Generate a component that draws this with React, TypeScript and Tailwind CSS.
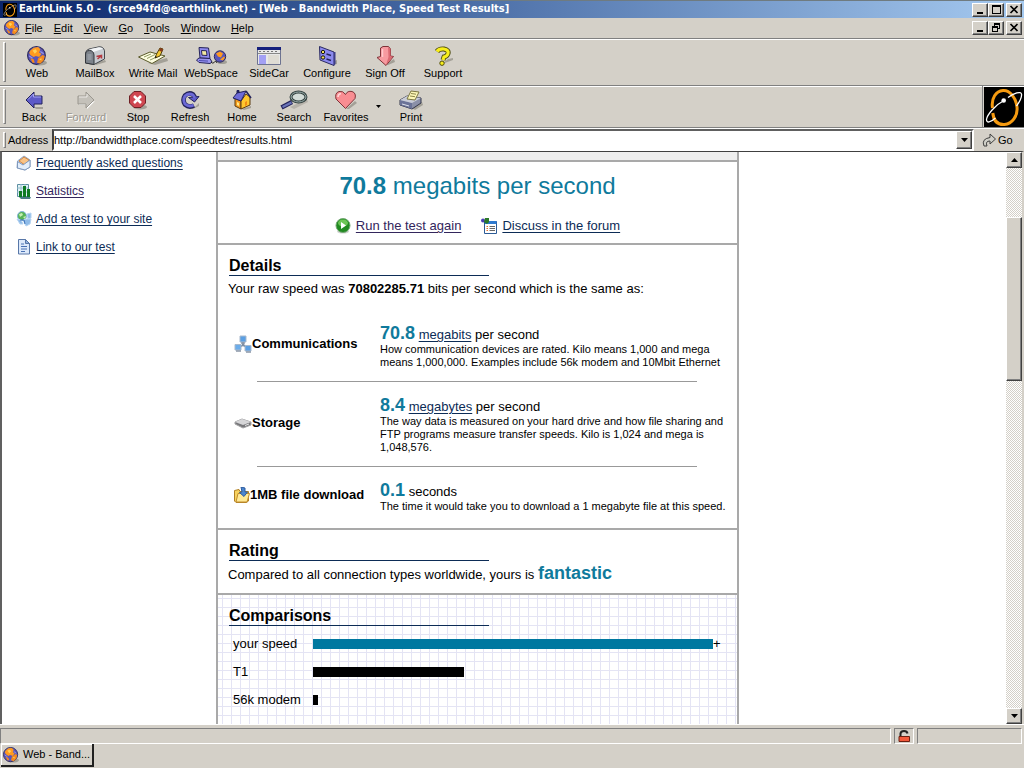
import { ReactNode } from "react";

type IconProps = { className?: string };

const bevel =
    "bg-[#d4d0c8] border border-t-white border-l-white border-r-[#404040] border-b-[#404040] shadow-[inset_-1px_-1px_0_#808080]";

const Globe = ({ className = "size-4" }: IconProps) => (
    <svg className={className} viewBox="0 0 18 18">
        <ellipse cx="11" cy="15" rx="7" ry="2.5" fill="#a3a097" />
        <circle cx="8.5" cy="8.5" r="8" fill="#5a55b8" stroke="#2c2a5c" />
        <path d="M3 4 6 1.500 10 1l2 2-1 3 2 1-2 3-3-1-2 1-3-2-1-2z" fill="#ff9a1f" />
        <path d="M10 11l4-3 2 1-1 4-3 3-3-1zM3 11l3 1 1 3-2 0z" fill="#f58a1c" />
        <path d="M5 4l3-1 1 2-2 2zM11 12l2-1 0 2z" fill="#ffd25a" />
        <path d="M2 9l3 2M12 5l3 2" stroke="#9a98e8" />
    </svg>
);

const MailBoxIcon = () => (
    <svg className="h-5 w-6" viewBox="0 0 24 20">
        <path d="M11 17 22 14l1 2-10 3z" fill="#a3a097" />
        <path d="M2.500 17V7q.5-3 3.500-4L16 .8q4.500-.3 5.500 4V13L11 18.500z" fill="#c7cbd0" stroke="#45484d" />
        <path d="M2.500 17V9q0-4.500 4-4.500T11 9v9.500z" fill="#7d838b" stroke="#33363b" />
        <path d="M6 3.200 16 1.200q2.500 0 4 1.500L10.500 6Q9 3.500 6 3.200z" fill="#f4f6f8" />
        <path d="M4.500 9h4M4.500 11h4M4.500 13h4" stroke="#a9aeb6" />
        <path d="M13.500 10.500l5-1v3M14.500 13l3.500-3" stroke="#b33a40" fill="none" strokeWidth="1.500" />
    </svg>
);

const WriteIcon = () => (
    <svg className="h-5 w-8" viewBox="0 0 32 20">
        <path d="M11 17 30 12l1 3-13 4z" fill="#a3a097" />
        <path d="M1.500 11 13 6l15 4-13 7.500z" fill="#fdfde0" stroke="#5a5a2a" />
        <path d="M7 11l7-3M10 12.500l8-4M13 14l9-4" stroke="#8f9a62" />
        <path d="M18 12l1.500-4L23 2l3 1-3 7z" fill="#f0c631" stroke="#4f4210" />
        <path d="M23 2l3 1-1 3-3-1.500z" fill="#8a3c1c" />
        <path d="M18 12l2-1-1.500-1z" fill="#111" />
    </svg>
);

const WebSpaceIcon = () => (
    <svg className="h-5 w-8" viewBox="0 0 32 20">
        <path d="M4 1.500 13.500 2 15 12.500 5 12z" fill="#8e8aee" stroke="#25235a" />
        <path d="M6.500 4.500l5 .3.500 4.700-5-.3z" fill="#f3e9a0" stroke="#25235a" />
        <path d="M1.500 14 4 12l11 .5L17 16l-2 1.500-11-1z" fill="#9995ee" stroke="#25235a" />
        <path d="M4 14.500l9 .6" stroke="#4d4ab0" />
        <path d="M16 16q2 2.500 3.500 0t2.500 1" fill="none" stroke="#222" />
        <ellipse cx="27" cy="16" rx="5" ry="2" fill="#a3a097" />
        <circle cx="25" cy="10.500" r="5.700" fill="#5a55b8" stroke="#2c2a5c" />
        <path d="M21 7.500l4-2 3 2-2 4-3-1zM25 13.500l4-3 1 1-2 3z" fill="#ff9a1f" />
    </svg>
);

const SideCarIcon = () => (
    <svg className="h-5 w-6" viewBox="0 0 24 20">
        <path d="M.5 1.500h23v17H.5z" fill="#e8e8e8" stroke="#6d7390" />
        <path d="M0 1h24v3H0z" fill="#16207c" />
        <path d="M2 5.500h20" stroke="#777" strokeDasharray="2 2" />
        <path d="M1 7.500h22" stroke="#888" />
        <path d="M2 9h7v9H2z" fill="#a3a0f4" />
        <path d="M11 9h11v9H11z" fill="#dfdcd4" />
    </svg>
);

const ConfigureIcon = () => (
    <svg className="h-5 w-6" viewBox="0 0 24 20">
        <path d="M14 17l8-3v4l-5 1z" fill="#a3a097" />
        <path d="M4.500.5 19 6v13.500L5 14z" fill="#8b89ee" stroke="#2b2a60" />
        <path d="M19 6h1.500v12L19 19.500z" fill="#3f3d88" />
        <circle cx="8" cy="6" r="1.700" fill="#f2e05a" stroke="#111" />
        <circle cx="8" cy="11.500" r="1.700" fill="#f2e05a" stroke="#111" />
        <path d="M11.500 8l4.500 1.500M11.500 13l4.500 1.500" stroke="#24235a" strokeWidth="1.500" />
    </svg>
);

const SignOffIcon = () => (
    <svg className="h-5 w-5" viewBox="0 0 20 20">
        <path d="M11 18l8-5 1 3-7 3z" fill="#a3a097" />
        <path d="M5.500 2 8 .5h5.500L15.500 3v7l3 .5L11 19.500 2 11.500l3.500-1z" fill="#f79aa0" stroke="#7e3338" />
        <path d="M13 1l2.500 2v7.500l2.500 0-7 8.500 2.500-8z" fill="#dc6a73" />
        <path d="M7.500 3v8" stroke="#ffc9cc" strokeWidth="1.500" />
    </svg>
);

const SupportIcon = () => (
    <svg className="h-5 w-5" viewBox="0 0 20 20">
        <path d="M9 18l6-5 5-1v2z" fill="#a3a097" />
        <path d="M4 5.500Q6 2.500 11 3q5 1 4 4.500-1 3-4 3.500l-1 3" fill="none" stroke="#4d4b10" strokeWidth="5" />
        <path d="M4 5.500Q6 2.500 11 3q5 1 4 4.500-1 3-4 3.500l-1 3" fill="none" stroke="#f8ee1c" strokeWidth="3.200" />
        <circle cx="9" cy="17.200" r="2.200" fill="#f8ee1c" stroke="#4d4b10" />
    </svg>
);

const BackIcon = () => (
    <svg className="h-5 w-5" viewBox="0 0 20 20">
        <path d="M10 17h9v2h-7z" fill="#a3a097" />
        <path d="M2 10 10 2v4h8v8h-8v4z" fill="#5d5ac8" stroke="#23225c" />
        <path d="M4 9.500 9.500 4v3H17" fill="none" stroke="#a6a4f4" />
    </svg>
);

const ForwardIcon = () => (
    <svg className="h-5 w-5" viewBox="0 0 20 20">
        <path d="M19 11l-8 8v-4H3v-2l8 1z" fill="#fff" />
        <path d="M18 10 10 2v4H2v8h8v4z" fill="#c4c1ba" stroke="#9a978f" />
        <path d="M3 7h8V4" fill="none" stroke="#eceae6" />
    </svg>
);

const StopIcon = () => (
    <svg className="h-5 w-5" viewBox="0 0 20 20">
        <ellipse cx="12" cy="17" rx="7" ry="2.500" fill="#a3a097" />
        <path d="M6 1.500h7L17.500 6v7L13 17.500H6L1.500 13V6z" fill="#cf4750" stroke="#6e1f24" />
        <path d="M6 6l7 7M13 6l-7 7" stroke="#fff" strokeWidth="2.500" />
    </svg>
);

const RefreshIcon = () => (
    <svg className="h-5 w-5" viewBox="0 0 20 20">
        <path d="M7 18l8-1 4-4v3l-6 3z" fill="#a3a097" />
        <path d="M14 15.500Q9 18 5 14.500 2 10 5 5.500 9 2 13 4.500l2 3" fill="none" stroke="#23225c" strokeWidth="4.600" />
        <path d="M19 6.500 14.500 12 8.500 7.500z" fill="#5d5ac8" stroke="#23225c" />
        <path d="M13.500 15Q9 17.500 5 14 2.500 10 5 6q4-3.500 8-1l2 3" fill="none" stroke="#6c69d6" strokeWidth="2.800" />
    </svg>
);

const HomeIcon = () => (
    <svg className="h-5 w-5" viewBox="0 0 20 20">
        <path d="M10 19l9-3v2l-7 2z" fill="#a3a097" />
        <path d="M3 8v8l6 3V11z" fill="#f29a1e" stroke="#5a3a10" />
        <path d="M9 11v8l9-4V7l-4-3z" fill="#ffc72e" stroke="#5a3a10" />
        <path d="M1 8 5 3l9-2-5 10z" fill="#6f6cd8" stroke="#23225c" />
        <path d="M5 3V.500h2V3" fill="#23225c" stroke="#23225c" />
        <path d="M14 1l5 7" stroke="#23225c" strokeWidth="1.500" />
        <path d="M13 12l2-1v4l-2 1z" fill="#f08c14" />
        <path d="M5 12l2 1v3l-2-1z" fill="#ffe98a" />
    </svg>
);

const SearchIcon = () => (
    <svg className="h-5 w-7" viewBox="0 0 28 20">
        <path d="M10 17 27 9l1 3-14 7z" fill="#a3a097" opacity=".6" />
        <path d="M12 12 1.500 17.500" stroke="#23225c" strokeWidth="4.500" />
        <path d="M11.500 12.500 2.500 17" stroke="#6a74b8" strokeWidth="2.200" />
        <ellipse cx="18.500" cy="7" rx="7.500" ry="5" fill="#d3dcd8" stroke="#33403f" strokeWidth="3" />
        <ellipse cx="18.500" cy="7" rx="7.500" ry="5" fill="none" stroke="#9fb3b1" />
    </svg>
);

const FavoritesIcon = () => (
    <svg className="h-5 w-6" viewBox="0 0 24 20">
        <path d="M12 19l9-8 2 2-8 6z" fill="#a3a097" />
        <path d="M11.500 18.500 2 9Q.5 3 5 1.500q4-1 6.500 3 2-4 6.500-3 4.500 1.500 3 7z" fill="#f98d92" stroke="#7e3338" />
        <path d="M4 7q0-3 3-3.500" fill="none" stroke="#ffd3d5" strokeWidth="1.500" />
    </svg>
);

const PrintIcon = () => (
    <svg className="h-5 w-6" viewBox="0 0 24 20">
        <path d="M13 18l10-6 1 3-8 5z" fill="#a3a097" />
        <path d="M1 10 8 6l14 2v5l-9 6L1 15z" fill="#8b90a8" stroke="#33364a" />
        <path d="M1 10l12 3v6L1 15z" fill="#6b7398" />
        <path d="M1 10 8 6l14 2-9 5z" fill="#c9ccd8" />
        <path d="M8 9l4-8 8 1-4 8z" fill="#fdf7b8" stroke="#7a7540" />
        <path d="M12 3.500l5 .7M11 6l5 .7" stroke="#8d874a" />
        <path d="M3 14l7 2" stroke="#dfe2ec" />
    </svg>
);

const EarthLinkLogo = ({ className = "size-10" }: IconProps) => (
    <svg className={className} viewBox="0 0 40 40">
        <path d="M0 0h40v40H0z" fill="#000" />
        <path
            d="M8.500 21C7 11 12 4 19 3.500S32 11 33 20s-5 17-12.500 17.500S9.500 33 8.800 26"
            fill="none"
            stroke="#f59a10"
            strokeWidth="3"
        />
        <path
            d="M24 10.500C30 6 37 4 37.500 7s-2 8-5 12M20 13.500C11 18 3 28 2.500 32.500c0 4 4 3 9-1.500"
            fill="none"
            stroke="#fff"
            strokeWidth="1.300"
        />
        <circle cx="19.700" cy="13.500" r="2.300" fill="#fff" />
    </svg>
);

const EnvelopeIcon = () => (
    <svg className="size-4" viewBox="0 0 16 16">
        <path d="M1.500 6 8 1l6 4v7l-5 3-8-2z" fill="#c8dcf2" stroke="#8fa6c4" />
        <path d="M3 6l5-4 5 3-4 5z" fill="#f9c386" stroke="#d4843c" />
        <path d="M1.500 6.500 7 10l7-5v7l-5 3-7.500-2z" fill="#e3eefb" stroke="#8099bd" />
    </svg>
);

const StatsIcon = () => (
    <svg className="size-4" viewBox="0 0 16 16">
        <path d="M1.500 1.500h11v12h-11z" fill="#e2f2f6" stroke="#5d8fa2" />
        <path d="M1 5h11M1 9h11M5 1v12M9 1v12" stroke="#94bccb" />
        <path d="M3 8h3v6H3zM7 3h3v11H7zM11 6h3v9h-3z" fill="#0d7a22" />
        <path d="M3 14h12l-1 2H5z" fill="#4a7d84" />
    </svg>
);

const SiteIcon = () => (
    <svg className="size-4" viewBox="0 0 16 16">
        <circle cx="6" cy="5" r="4.500" fill="#57b457" stroke="#87b6dc" />
        <path d="M3 3l3-1 1 2-3 2zM7 6l3-1-1 3z" fill="#c5efb0" />
        <path d="M1 8l4 1 2 4H4zM11 3l4-1v5l-3 1zM7 9l4-1h4l-1 5-4 2z" fill="#8fbbe8" stroke="#b5d4f2" />
        <path d="M4 9h4l1 4" stroke="#3d72b8" fill="none" />
    </svg>
);

const DocIcon = () => (
    <svg className="size-4" viewBox="0 0 16 16">
        <path d="M2.500.5h7l4 4v10.500h-11z" fill="#dce9fb" stroke="#5877a8" />
        <path d="M9.500.5v4h4z" fill="#8fb0df" stroke="#5877a8" />
        <path d="M5 5h3M5 7.500h6M5 10h6M5 12.500h4" stroke="#4a72b5" />
    </svg>
);

const RunIcon = () => (
    <svg className="size-4" viewBox="0 0 16 16">
        <ellipse cx="8" cy="13.500" rx="6" ry="2" fill="#cfd4cf" />
        <circle cx="8" cy="7.500" r="7" fill="#218a21" stroke="#75a875" />
        <ellipse cx="8" cy="5" rx="5" ry="3.500" fill="#6cc556" />
        <path d="M6 4l5 3.500L6 11z" fill="#fff" />
    </svg>
);

const ForumIcon = () => (
    <svg className="size-4" viewBox="0 0 16 16">
        <path d="M3.500 3.500h12v12h-12z" fill="#fff" stroke="#2c5b96" />
        <path d="M4 3h11.500v3H4z" fill="#2f7bd0" />
        <path d="M8.500 8.500H14M8.500 10.500H14M8.500 12.500H14" stroke="#666" />
        <path d="M5.500 8.500H7M5.500 10.500H7M5.500 12.500H7" stroke="#e0702c" />
        <circle cx="2" cy="2.500" r="2" fill="#4a3fb5" />
        <path d="M4 0h4v4l-2 2-3-2z" fill="#2d7a2a" />
    </svg>
);

const NetworkIcon = () => (
    <svg className="size-[18px]" viewBox="0 0 18 18">
        <path d="M9 6v5M9 10l-5 3M9 10l6 3" stroke="#7d8fa5" strokeWidth="2" />
        <path d="M6 1h6v6H6z" fill="#5b9fe3" stroke="#a9b9cc" />
        <path d="M1 9.500h6v5.500H1z" fill="#6badeb" stroke="#a9b9cc" />
        <path d="M11 10.500h6v5.500h-6z" fill="#5b9fe3" stroke="#a9b9cc" />
        <path d="M2 16h5M12 17h5M7 8h4" stroke="#8a97a8" strokeWidth="1.500" />
    </svg>
);

const DriveIcon = () => (
    <svg className="size-[18px]" viewBox="0 0 18 18">
        <path d="M1 8l7-3 9 3v3l-8 3-8-4z" fill="#77777a" stroke="#a4a4a6" />
        <path d="M1 8l7-3 9 3-8 3z" fill="#d6d6d8" />
        <path d="M11 11.500l4-1.500" stroke="#e8e8e8" />
    </svg>
);

const FolderIcon = () => (
    <svg className="size-4" viewBox="0 0 16 16">
        <path d="M.5 3.500 5 2.500l1 2h8.500V14l-2 1.500H2L.5 14z" fill="#f7d25e" stroke="#b07f24" />
        <path d="M4 6.500h11.500L13 15H2z" fill="#ffe995" stroke="#c08c2c" />
        <path d="M7 0l4 1v4h2.500L10 9.500 5.500 5.500 8 5z" fill="#4b86cf" stroke="#2f5c9e" />
    </svg>
);

const LockIcon = () => (
    <svg className="h-3 w-3" viewBox="0 0 12 12">
        <path d="M2.500 6V3.500Q3 1 6 1t3.500 2.500" fill="none" stroke="#222" strokeWidth="2" />
        <path d="M1 6.500h10.500v5H1z" fill="#f2583a" stroke="#6b2012" />
        <path d="M2 9h9" stroke="#f2583a" />
    </svg>
);

const Triangle = ({ up = false }: { up?: boolean }) => (
    <svg className="h-1 w-[7px]" viewBox="0 0 7 4">
        <path d={up ? "M0 4h7L3.500 0z" : "M0 0h7L3.500 4z"} fill="#000" />
    </svg>
);

const glyphs = {
    Minimize: <path d="M2 7h6v2H2z" />,
    Maximize: <path d="M1 0h9v9H1zM2 2v6h7V2z" fillRule="evenodd" />,
    Restore: <path d="M3 0h6v6H7v3H1V3h2zM4 2v1h3v2h1V2zM2 5v3h4V5z" fillRule="evenodd" />,
    Close: <path d="M1.500 1l7 7M8.500 1l-7 7" stroke="#000" strokeWidth="1.700" />,
};

const WindowButton = ({ name }: { name: keyof typeof glyphs }) => (
    <button
        aria-label={name}
        className={`${bevel} flex h-[14px] w-4 items-center justify-center`}
    >
        <svg className="size-[10px]" viewBox="0 0 10 10">
            {glyphs[name]}
        </svg>
    </button>
);

const WindowButtons = ({ restore = false }: { restore?: boolean }) => (
    <div className="ml-auto flex">
        <WindowButton name="Minimize" />
        <WindowButton name={restore ? "Restore" : "Maximize"} />
        <div className="w-[2px]" />
        <WindowButton name="Close" />
    </div>
);

const menus = ["File", "Edit", "View", "Go", "Tools", "Window", "Help"];

const mainTools = [
    { label: "Web", icon: <Globe className="h-5 w-5" /> },
    { label: "MailBox", icon: <MailBoxIcon /> },
    { label: "Write Mail", icon: <WriteIcon /> },
    { label: "WebSpace", icon: <WebSpaceIcon /> },
    { label: "SideCar", icon: <SideCarIcon /> },
    { label: "Configure", icon: <ConfigureIcon /> },
    { label: "Sign Off", icon: <SignOffIcon /> },
    { label: "Support", icon: <SupportIcon /> },
];

const webTools = [
    { label: "Back", icon: <BackIcon /> },
    { label: "Forward", icon: <ForwardIcon />, disabled: true },
    { label: "Stop", icon: <StopIcon /> },
    { label: "Refresh", icon: <RefreshIcon /> },
    { label: "Home", icon: <HomeIcon /> },
    { label: "Search", icon: <SearchIcon /> },
    { label: "Favorites", icon: <FavoritesIcon />, menu: true },
    { label: "Print", icon: <PrintIcon /> },
];

const sideLinks = [
    { label: "Frequently asked questions", icon: <EnvelopeIcon /> },
    { label: "Statistics", icon: <StatsIcon />, visited: true },
    { label: "Add a test to your site", icon: <SiteIcon /> },
    { label: "Link to our test", icon: <DocIcon /> },
];

const bars = [
    { label: "your speed", width: 400, color: "bg-[#0078a0]", over: true },
    { label: "T1", width: 151, color: "bg-black" },
    { label: "56k modem", width: 5, color: "bg-black" },
];

const Grip = () => (
    <div className="mr-[2px] ml-[3px] my-[3px] w-[3px] border border-t-white border-l-white border-r-[#808080] border-b-[#808080]" />
);

const Link = ({ children, visited = false }: { children: ReactNode; visited?: boolean }) => (
    <a href="#" className={`underline underline-offset-2 ${visited ? "text-[#33265c]" : "text-[#0c2c56]"}`}>
        {children}
    </a>
);

const Heading = ({ children }: { children: ReactNode }) => (
    <h2 className="ml-[11px] w-[260px] border-b border-[#0c2c56] text-base leading-[18px] font-bold">{children}</h2>
);

type DetailProps = {
    icon: ReactNode;
    label: string;
    value: string;
    unit: ReactNode;
    children: ReactNode;
};

const Detail = ({ icon, label, value, unit, children }: DetailProps) => (
    <div className="flex">
        <dt className="flex w-[146px] shrink-0 items-center pb-1 leading-4 font-bold whitespace-nowrap">
            {icon}
            {label}
        </dt>
        <dd className="w-[354px]">
            <p className="pt-1 leading-4">
                <b className="text-lg leading-3 text-[#0f7a9c]">{value}</b> {unit}
            </p>
            <p className="text-[11px] leading-[13px]">{children}</p>
        </dd>
    </div>
);

const App = () => {
    return (
        <div className="flex h-screen flex-col overflow-hidden bg-[#d4d0c8] font-['Liberation_Sans',Arial,sans-serif] text-[11px] text-black">
            <header className="shrink-0">
                <div className="flex h-[18px] items-center border-t border-[#6f7b80] bg-linear-to-r from-[#0a246a] to-[#a6caf0] pr-[2px] pl-[3px]">
                    <EarthLinkLogo className="size-[14px]" />
                    <h1 className="ml-[2px] font-['DejaVu_Sans_Condensed',sans-serif] font-bold whitespace-pre text-white">
                        {"EarthLink 5.0 -  (srce94fd@earthlink.net) - [Web - Bandwidth Place, Speed Test Results]"}
                    </h1>
                    <WindowButtons />
                </div>

                <nav className="flex h-5 items-center pr-[2px] pl-1">
                    <Globe />
                    <div className="ml-[5px] flex gap-[11px]">
                        {menus.map((menu) => (
                            <button key={menu}>
                                <u>{menu[0]}</u>
                                {menu.slice(1)}
                            </button>
                        ))}
                    </div>
                    <WindowButtons restore />
                </nav>

                <div className="flex h-[47px] border-t border-[#808080] shadow-[inset_0_1px_0_#fff]">
                    <Grip />
                    {mainTools.map((tool) => (
                        <button
                            key={tool.label}
                            className="flex w-[58px] flex-col items-center justify-center pt-[2px] whitespace-nowrap"
                        >
                            {tool.icon}
                            <span className="leading-[14px]">{tool.label}</span>
                        </button>
                    ))}
                </div>

                <div className="flex h-[42px] border-t border-[#808080] shadow-[inset_0_1px_0_#fff]">
                    <Grip />
                    {webTools.map((tool) => (
                        <div key={tool.label} className="flex">
                            <button
                                disabled={tool.disabled}
                                className="flex w-[52px] flex-col items-center justify-center whitespace-nowrap disabled:text-[#9a978f] disabled:[text-shadow:1px_1px_0_#fff]"
                            >
                                {tool.icon}
                                <span className="leading-[14px]">{tool.label}</span>
                            </button>
                            {tool.menu && (
                                <button aria-label="Favorites menu" className="flex w-[13px] items-center justify-center">
                                    <svg className="h-[3px] w-[5px]" viewBox="0 0 5 3">
                                        <path d="M0 0h5L2.500 3z" />
                                    </svg>
                                </button>
                            )}
                        </div>
                    ))}
                    <div className="ml-auto border-l border-[#808080] pt-px pl-px">
                        <EarthLinkLogo />
                    </div>
                </div>

                <form className="flex h-6 border-t border-[#808080] pt-px shadow-[inset_0_1px_0_#fff]">
                    <Grip />
                    <label htmlFor="address" className="w-11 leading-[22px]">
                        Address
                    </label>
                    <div className="flex flex-1 border-2 border-r-white border-b-white border-t-[#606060] border-l-[#404040] bg-white">
                        <input
                            id="address"
                            className="min-w-0 flex-1 outline-none"
                            defaultValue="http://bandwidthplace.com/speedtest/results.html"
                        />
                        <button type="button" aria-label="Show addresses" className={`${bevel} flex w-4 items-center justify-center`}>
                            <Triangle />
                        </button>
                    </div>
                    <button type="button" className="flex w-[50px] items-center gap-[2px] pl-2">
                        <svg className="size-[14px]" viewBox="0 0 14 14">
                            <path d="M2 13Q-1 6 8 4.500V1l5.500 5L8 11V8Q3 8 5 13z" fill="#cfcfc8" stroke="#3f3f3f" />
                        </svg>
                        Go
                    </button>
                </form>
            </header>

            <div className="flex min-h-0 flex-1 border-t border-r-2 border-l-2 border-t-[#404040] border-r-[#d4d0c8] border-l-[#606060] bg-white">
                <aside className="w-[214px] shrink-0 pt-px pl-[14px]">
                    <ul className="flex flex-col gap-2 text-xs leading-5">
                        {sideLinks.map((link) => (
                            <li key={link.label} className="flex items-center gap-1">
                                {link.icon}
                                <Link visited={link.visited}>{link.label}</Link>
                            </li>
                        ))}
                    </ul>
                </aside>

                <main className="w-[523px] shrink-0 overflow-hidden border-x-2 border-[#a9a9a9] text-[13px]">
                    <div className="h-2 bg-[#eee]" />

                    <section className="border-t-2 border-[#a9a9a9] pt-[10px] pb-[7px] text-center">
                        <p className="text-2xl leading-7 text-[#0f7a9c]">
                            <b>70.8</b> megabits per second
                        </p>
                        <p className="mt-4 flex justify-center gap-5 leading-5">
                            <span className="flex items-center gap-[5px]">
                                <RunIcon />
                                <Link visited>Run the test again</Link>
                            </span>
                            <span className="flex items-center gap-[5px]">
                                <ForumIcon />
                                <Link>Discuss in the forum</Link>
                            </span>
                        </p>
                    </section>

                    <section className="border-t-2 border-[#a9a9a9] pt-3 pb-[15px]">
                        <Heading>Details</Heading>
                        <p className="mt-[5px] ml-[10px] leading-4">
                            Your raw speed was <b>70802285.71</b> bits per second which is the same as:
                        </p>
                        <dl className="mt-[26px] pl-4">
                            <Detail
                                icon={<NetworkIcon />}
                                label="Communications"
                                value="70.8"
                                unit={<><Link>megabits</Link> per second</>}
                            >
                                How communication devices are rated. Kilo means 1,000 and mega means 1,000,000. Examples
                                include 56k modem and 10Mbit Ethernet
                            </Detail>
                            <hr className="mt-3 mb-[13px] ml-[23px] w-[440px] border-[#999]" />
                            <Detail
                                icon={<DriveIcon />}
                                label="Storage"
                                value="8.4"
                                unit={<><Link>megabytes</Link> per second</>}
                            >
                                The way data is measured on your hard drive and how file sharing and FTP programs measure
                                transfer speeds. Kilo is 1,024 and mega is 1,048,576.
                            </Detail>
                            <hr className="mt-3 mb-[13px] ml-[23px] w-[440px] border-[#999]" />
                            <Detail icon={<FolderIcon />} label="1MB file download" value="0.1" unit="seconds">
                                The time it would take you to download a 1 megabyte file at this speed.
                            </Detail>
                        </dl>
                    </section>

                    <section className="border-t-2 border-[#a9a9a9] pt-3 pb-2">
                        <Heading>Rating</Heading>
                        <p className="mt-1 ml-[10px] leading-5">
                            Compared to all connection types worldwide, yours is{" "}
                            <b className="text-lg leading-4 text-[#0f7a9c]">fantastic</b>
                        </p>
                    </section>

                    <section className="h-40 border-t-2 border-[#a9a9a9] bg-[linear-gradient(to_right,#e4e4f4_1px,transparent_1px),linear-gradient(to_bottom,#e4e4f4_1px,transparent_1px)] bg-[length:9px_9px] bg-[position:4px_3px] pt-3">
                        <Heading>Comparisons</Heading>
                        <ul className="mt-1 ml-[15px]">
                            {bars.map((bar) => (
                                <li key={bar.label} className="flex h-7 items-center">
                                    <span className="w-20">{bar.label}</span>
                                    <span className={`h-[10px] ${bar.color}`} style={{ width: bar.width }} />
                                    {bar.over && "+"}
                                </li>
                            ))}
                        </ul>
                    </section>
                </main>

                <div className="ml-auto flex w-4 flex-col bg-[repeating-conic-gradient(#fff_0_25%,#d4d0c8_0_50%)] bg-[length:2px_2px]">
                    <button aria-label="Scroll up" className={`${bevel} flex h-4 items-center justify-center`}>
                        <Triangle up />
                    </button>
                    <div className="flex-[49]" />
                    <div className={`${bevel} flex-[163]`} />
                    <div className="flex-[328]" />
                    <button aria-label="Scroll down" className={`${bevel} flex h-4 items-center justify-center`}>
                        <Triangle />
                    </button>
                </div>
            </div>

            <footer className="shrink-0">
                <div className="flex h-5 gap-[3px] border-t border-white pt-[3px] pr-[2px]">
                    <div className="flex-1 border border-t-[#808080] border-l-[#808080] border-r-white border-b-white" />
                    <div className="flex w-5 items-center justify-center border border-t-[#808080] border-l-[#808080] border-r-white border-b-white">
                        <LockIcon />
                    </div>
                    <div className="w-[105px] border border-t-[#808080] border-l-[#808080] border-r-white border-b-white" />
                </div>
                <div className="h-6 px-px">
                    <button className="flex h-[23px] w-[93px] items-center gap-1 border-r-2 border-b-2 border-[#202020] pl-[2px] shadow-[inset_1px_1px_0_#fff]">
                        <Globe />
                        Web - Band...
                    </button>
                </div>
            </footer>
        </div>
    );
};

export default App;
